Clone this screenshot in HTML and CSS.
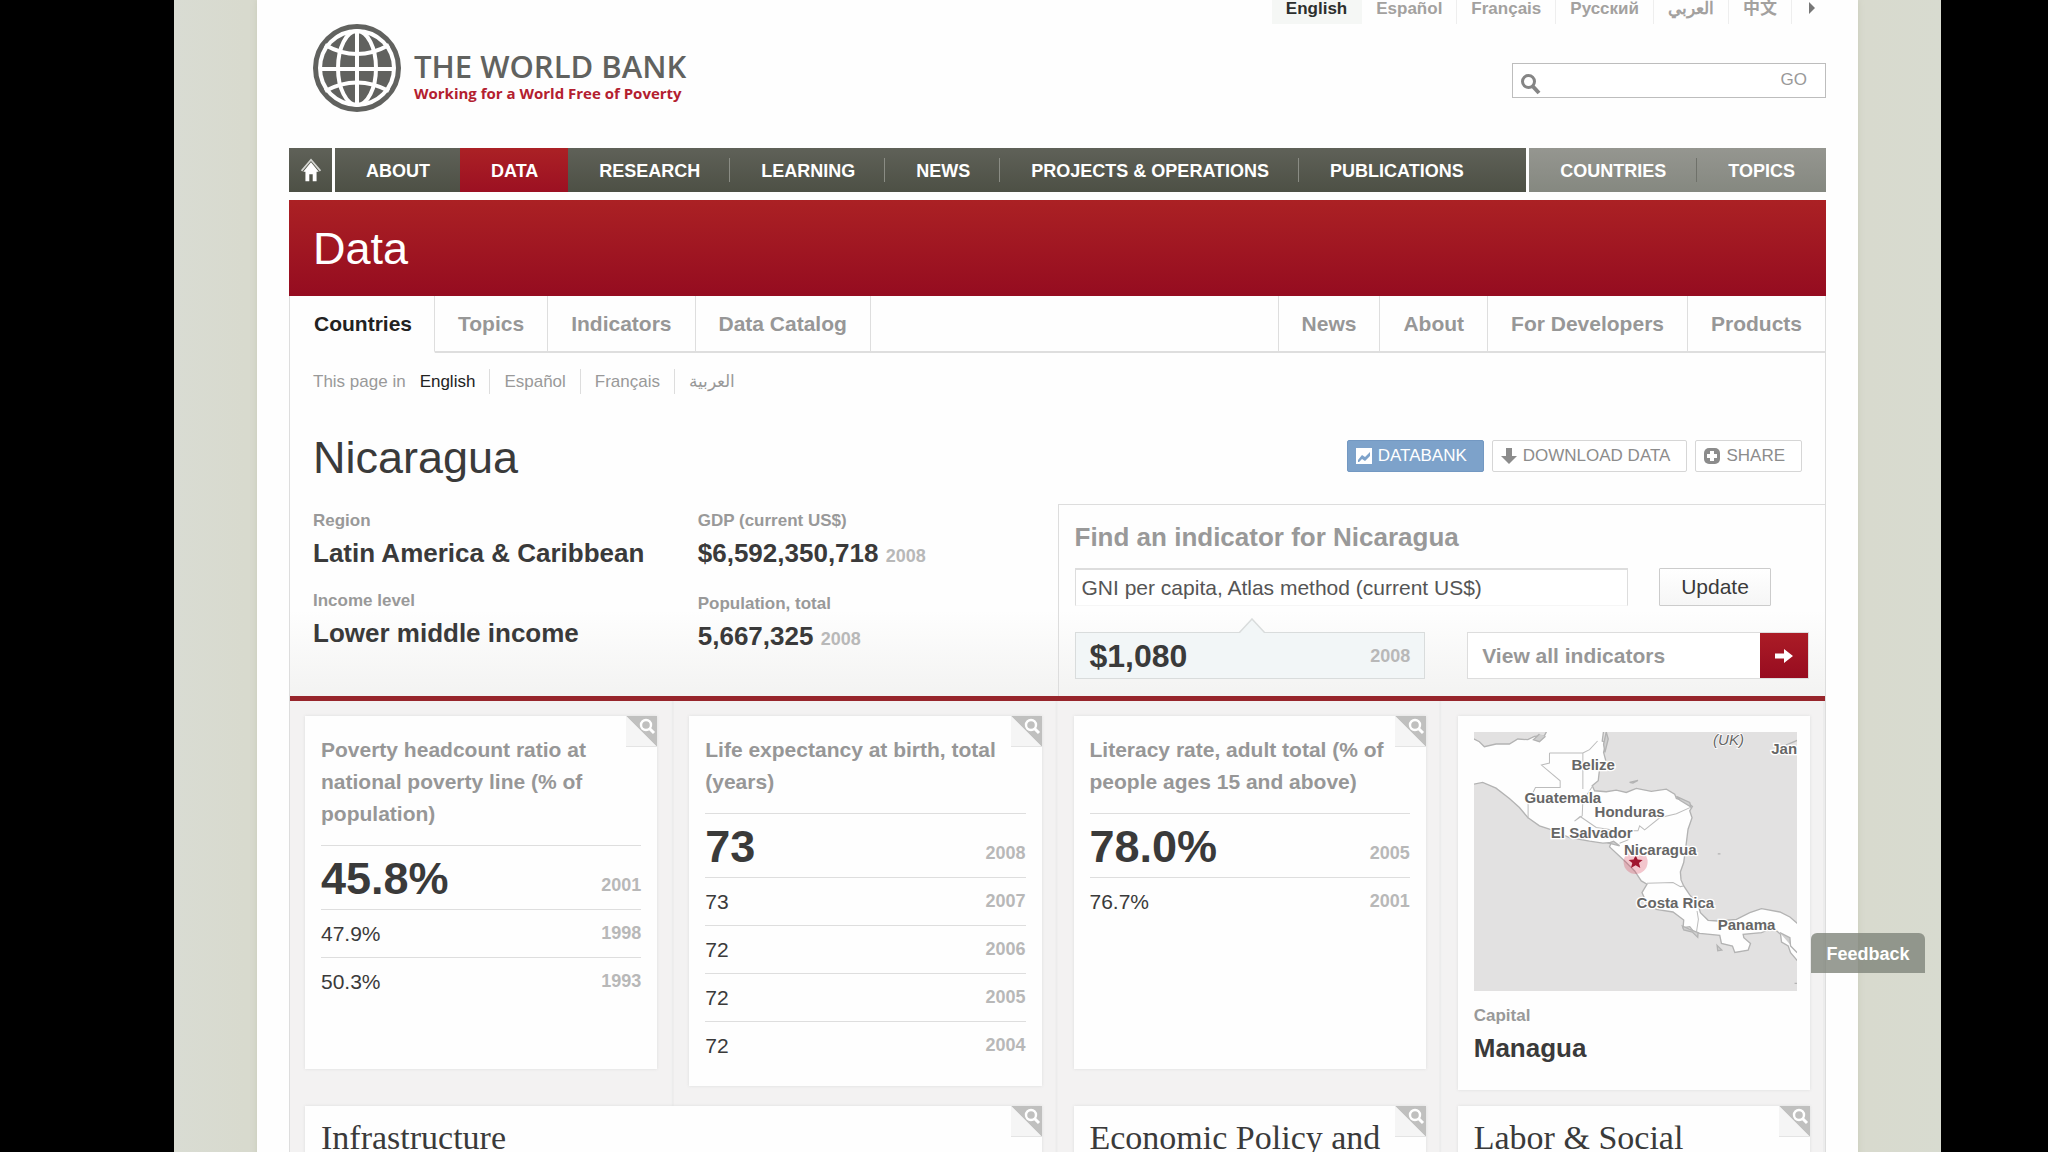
FILE: index.html
```html
<!DOCTYPE html>
<html lang="en">
<head>
<meta charset="utf-8">
<title>Nicaragua | Data | The World Bank</title>
<link rel="stylesheet" href="styles.css">
</head>
<body>
<svg class="defs" aria-hidden="true">
  <symbol id="zoom-corner" viewBox="0 0 31 31">
    <path d="M0 0H31V31Z" fill="#c0c0bf"/>
    <path d="M0 0V31H31Z" fill="#f5f5f5"/>
    <path d="M0 31H31" stroke="#e4e4e4" stroke-width="2"/>
    <circle cx="20" cy="9" r="5" fill="none" stroke="#fff" stroke-width="2.4"/>
    <path d="M23.5 12.5L28 17" stroke="#fff" stroke-width="3"/>
  </symbol>
</svg>
<div class="backdrop">
<div class="page">
  <header class="header">
    <a class="logo" href="#">
      <svg class="globe" viewBox="0 0 88 88" aria-hidden="true">
        <circle cx="44" cy="44" r="41.5" fill="#fff" stroke="#61625f" stroke-width="5"/>
        <circle cx="44" cy="44" r="35" fill="#61625f"/>
        <g fill="none" stroke="#fff" stroke-width="4">
          <path d="M44 8V80M8 45H80"/>
          <ellipse cx="44" cy="44" rx="19" ry="37"/>
          <path d="M12 21Q44 39 76 21M12 67Q44 50 76 67"/>
        </g>
      </svg>
      <span class="logo-text">
        <span class="logo-name">THE WORLD BANK</span>
        <span class="logo-tag">Working for a World Free of Poverty</span>
      </span>
    </a>
    <div class="header-tools">
      <nav class="langs" aria-label="Site language">
        <a class="current" href="#">English</a>
        <a href="#">Español</a>
        <a href="#">Français</a>
        <a href="#">Русский</a>
        <a href="#" lang="ar">العربي</a>
        <a href="#" lang="zh">中文</a>
        <a class="more" href="#" aria-label="More languages"><svg viewBox="0 0 6 12" width="6" height="12"><path d="M0 0L6 6L0 12Z" fill="#777"/></svg></a>
      </nav>
      <form class="search">
        <svg viewBox="0 0 22 22" width="22" height="22" aria-hidden="true"><circle cx="8.500" cy="8.500" r="6" fill="none" stroke="#858585" stroke-width="3"/><path d="M12.500 13L19 20" stroke="#858585" stroke-width="4"/></svg>
        <input type="text" aria-label="Search">
        <button type="submit">GO</button>
      </form>
    </div>
  </header>

  <nav class="mainnav" aria-label="Main">
    <a class="home" href="#" aria-label="Home"><svg viewBox="0 0 24 28" width="24" height="24"><path d="M1 15L12 2L23 15" fill="none" stroke="#d5d6d2" stroke-width="2"/><path d="M12 5L21 16H18.500V27H14V19H10V27H5.500V16H3Z" fill="#fff"/></svg></a>
    <div class="nav-primary">
      <a href="#">ABOUT</a>
      <a class="active" href="#">DATA</a>
      <a href="#">RESEARCH</a>
      <a href="#">LEARNING</a>
      <a href="#">NEWS</a>
      <a href="#">PROJECTS &amp; OPERATIONS</a>
      <a href="#">PUBLICATIONS</a>
    </div>
    <div class="nav-secondary">
      <a href="#">COUNTRIES</a>
      <a href="#">TOPICS</a>
    </div>
  </nav>

  <div class="banner">Data</div>

  <main class="content">
    <nav class="tabs" aria-label="Data">
      <a class="current" href="#">Countries</a>
      <a href="#">Topics</a>
      <a href="#">Indicators</a>
      <a href="#">Data Catalog</a>
      <span class="tabs-fill"></span>
      <a href="#">News</a>
      <a href="#">About</a>
      <a href="#">For Developers</a>
      <a href="#">Products</a>
    </nav>

    <section class="overview">
      <nav class="page-langs" aria-label="Page language">
        <span>This page in</span>
        <a class="current" href="#">English</a>
        <a href="#">Español</a>
        <a href="#">Français</a>
        <a href="#" lang="ar">العربية</a>
      </nav>
      <div class="title-row">
        <h1>Nicaragua</h1>
        <div class="actions">
          <button class="action databank" type="button"><svg viewBox="0 0 16 16" width="16" height="16"><path d="M0 0H16V16H0Z" fill="#fff"/><path d="M2 12L6 7L9 9L14 4V8L9 13L6 11L3 14H2Z" fill="#7da2ca"/></svg>DATABANK</button>
          <button class="action" type="button"><svg viewBox="0 0 16 16" width="16" height="16"><path d="M5 0H11V8H16L8 16L0 8H5Z" fill="#8c8c8c"/></svg>DOWNLOAD DATA</button>
          <button class="action" type="button"><svg viewBox="0 0 16 16" width="16" height="16"><rect width="16" height="16" rx="5" fill="#8c8c8c"/><path d="M8 3V13M3 8H13" stroke="#fff" stroke-width="4"/></svg>SHARE</button>
        </div>
      </div>
      <div class="facts-row">
        <dl class="facts">
          <div><dt>Region</dt><dd>Latin America &amp; Caribbean</dd></div>
          <div><dt>Income level</dt><dd>Lower middle income</dd></div>
        </dl>
        <dl class="facts">
          <div><dt>GDP (current US$)</dt><dd>$6,592,350,718 <small>2008</small></dd></div>
          <div><dt>Population, total</dt><dd>5,667,325 <small>2008</small></dd></div>
        </dl>
        <form class="finder">
          <label for="indicator">Find an indicator for Nicaragua</label>
          <div class="finder-line">
            <select id="indicator"><option>GNI per capita, Atlas method (current US$)</option></select>
            <button class="update" type="button">Update</button>
          </div>
          <div class="results">
            <div class="result">
              <svg class="pointer" viewBox="0 0 28 15" aria-hidden="true"><path d="M1 15L14 1L27 15" fill="#f2f6f7" stroke="#d9dcdc" stroke-width="1.500"/></svg>
              <strong>$1,080</strong><small>2008</small>
            </div>
            <a class="view-all" href="#"><span>View all indicators</span><i><svg viewBox="0 0 18 14" width="18" height="14"><path d="M0 4.500H9V0L18 7L9 14V9.500H0Z" fill="#fff"/></svg></i></a>
          </div>
        </form>
      </div>
    </section>

    <section class="cards">
      <article class="card">
        <svg class="corner"><use href="#zoom-corner"/></svg>
        <h3>Poverty headcount ratio at national poverty line (% of population)</h3>
        <table>
          <tr class="latest"><td>45.8%</td><td>2001</td></tr>
          <tr><td>47.9%</td><td>1998</td></tr>
          <tr><td>50.3%</td><td>1993</td></tr>
        </table>
      </article>
      <article class="card">
        <svg class="corner"><use href="#zoom-corner"/></svg>
        <h3>Life expectancy at birth, total (years)</h3>
        <table>
          <tr class="latest"><td>73</td><td>2008</td></tr>
          <tr><td>73</td><td>2007</td></tr>
          <tr><td>72</td><td>2006</td></tr>
          <tr><td>72</td><td>2005</td></tr>
          <tr><td>72</td><td>2004</td></tr>
        </table>
      </article>
      <article class="card">
        <svg class="corner"><use href="#zoom-corner"/></svg>
        <h3>Literacy rate, adult total (% of people ages 15 and above)</h3>
        <table>
          <tr class="latest"><td>78.0%</td><td>2005</td></tr>
          <tr><td>76.7%</td><td>2001</td></tr>
        </table>
      </article>
      <article class="card map-card">
        <svg class="map" viewBox="44 39 968 777" role="img" aria-label="Map of Central America">
          <rect x="44" y="39" width="968" height="777" fill="#e2e1e1"/>
          <path class="land" d="M40 58L60 68L75 83L110 75L150 75L175 60L205 62L225 52L255 50L262 36H432L428 66L440 72L432 100L440 130L420 150L416 185L398 200L405 215L440 218L470 213L500 220L530 208L575 217L620 210L645 225L650 238L680 248L698 262L690 275L697 296L685 330L680 370L672 430L662 458L664 482L672 500L690 527L715 555L722 580L745 603L775 605L830 600L870 580L905 568L960 578L990 593L1016 615V728L992 700L985 680L965 668L962 645L940 625L905 640L850 645L852 655L872 672L865 692L825 699L818 680L785 672L780 648L720 642L700 635L690 622L670 625L672 602L640 578L590 570L556 540L547 520L562 495L545 485L525 455L500 430L450 383L455 370L430 372L390 366L330 355L270 330L240 320L205 295L180 265L150 238L110 207L70 190L40 196Z"/>
          <path class="shore" d="M240 45L222 62L240 68L258 52M650 232L690 250L694 264L662 244ZM440 39L446 60L436 100L432 76ZM510 190L535 184L520 192ZM668 620L690 630L715 640L714 654L698 638L672 632ZM772 678L786 692L774 694ZM448 372L480 380L462 366ZM774 404H782M978 78L1012 64M1004 792H1012M960 640L990 655L992 680L1012 700"/>
          <path class="border" d="M270 102H370V210M270 102V132L246 138L302 185V205H228L206 250V298M370 102L390 92L414 66M400 200L370 245L368 290L345 306L362 292L410 325L475 335H535L540 320L555 332L600 296L650 284L694 264M475 335L508 340L505 362L480 372M562 492L640 490L662 502L672 500M712 575L716 600L710 640"/>
          <circle cx="528" cy="428" r="36" fill="#d6354f" opacity=".28"/>
          <path d="M528 408L534 421L549 422L538 431L542 446L528 438L514 446L518 431L507 422L522 421Z" fill="#a0152e"/>
          <g class="places">
            <text x="336" y="154">Belize</text>
            <text x="195" y="251">Guatemala</text>
            <text x="405" y="295">Honduras</text>
            <text x="274" y="357">El Salvador</text>
            <text x="493" y="407">Nicaragua</text>
            <text x="531" y="567">Costa Rica</text>
            <text x="774" y="632">Panama</text>
            <text x="934" y="106">Jan</text>
            <text class="sea" x="760" y="78">(UK)</text>
          </g>
        </svg>
        <dl class="capital"><dt>Capital</dt><dd>Managua</dd></dl>
      </article>
      <article class="card wide">
        <svg class="corner"><use href="#zoom-corner"/></svg>
        <h2>Infrastructure</h2>
      </article>
      <article class="card">
        <svg class="corner"><use href="#zoom-corner"/></svg>
        <h2>Economic Policy and</h2>
      </article>
      <article class="card">
        <svg class="corner"><use href="#zoom-corner"/></svg>
        <h2>Labor &amp; Social</h2>
      </article>
    </section>
  </main>
</div>
<button class="feedback" type="button">Feedback</button>
</div>
</body>
</html>
```

FILE: styles.css
```css
* { box-sizing: border-box; }

body {
  margin: 0;
  padding: 0 107px 0 174px;
  background: #000;
  color: #3a3a3a;
  font-family: "Liberation Sans", "Noto Sans CJK SC", sans-serif;
  font-size: 17px;
}

a { color: inherit; text-decoration: none; }
button, input, select { font: inherit; color: inherit; margin: 0; }
h1, h2, h3, dl, dd { margin: 0; }
.defs { display: none; }

.backdrop {
  position: relative;
  height: 100vh;
  overflow: hidden;
  padding: 0 83px;
  background: linear-gradient(90deg, #d9dcd3, #d8dace 4%, #d8dace 96%, #d8dbd0);
}

.page {
  min-height: 100%;
  padding: 0 32px;
  background: #fefefe;
  box-shadow: 0 0 6px #c8cab8;
}

/* Header */
.header {
  display: flex;
  justify-content: space-between;
  height: 148px;
}
.logo {
  display: flex;
  align-items: flex-start;
  gap: 13px;
  padding: 24px 0 0 24px;
}
.globe { width: 88px; height: 88px; }
.logo-text {
  display: flex;
  flex-direction: column;
  padding-top: 26px;
  font-family: "Open Sans", sans-serif;
  white-space: nowrap;
}
.logo-name { font-size: 31px; line-height: 33px; font-weight: 600; color: #61625f; }
.logo-tag { font-size: 15px; line-height: 20px; font-weight: 700; color: #b3202f; }

.header-tools {
  display: flex;
  flex-direction: column;
  align-items: flex-end;
  gap: 39px;
}
.langs {
  display: flex;
  height: 24px;
  font-size: 17px;
  font-weight: 700;
  line-height: 18px;
  color: #a3a19f;
}
.langs a { padding: 0 14px; border-right: 1px solid #eee; }
.langs .current { color: #2c2f2d; background: #f5f7f5; border-color: #f5f7f5; }
.langs .more { padding: 0 11px 0 17px; border: 0; }

.search {
  display: flex;
  align-items: center;
  width: 314px;
  height: 35px;
  padding: 0 8px 0 7px;
  border: 1px solid #bdbdbd;
  background: #fff;
}
.search svg { margin-top: 6px; flex: none; }
.search input { flex: 1; min-width: 0; border: 0; outline: 0; background: none; }
.search button { border: 0; padding: 0 10px 2px; background: none; color: #999; }

/* Main navigation */
.mainnav {
  display: flex;
  gap: 3px;
  height: 44px;
  margin-bottom: 8px;
  color: #fff;
  font-size: 18px;
  font-weight: 700;
  line-height: 46px;
}
.home, .nav-primary { background: linear-gradient(#5f6158, #4d5045); }
.home { display: flex; align-items: center; justify-content: center; width: 43px; }
.nav-primary { display: flex; flex: 1; }
.nav-secondary { display: flex; background: linear-gradient(#959690, #858880); }
.mainnav div a {
  padding: 0 30px 0 31px;
  background: linear-gradient(#8a8c84, #8a8c84) right center / 1px 24px no-repeat;
}
.nav-primary a:first-child, .mainnav div a:last-child { background: none; }
.nav-primary .active { background: linear-gradient(#ab2125, #9c1022); }
.mainnav .nav-secondary a { padding: 0 31px; }
.nav-secondary a:first-child { background-image: linear-gradient(#6f716a, #6f716a); }

.banner {
  height: 96px;
  padding-left: 24px;
  background: linear-gradient(#ab2124, #950c20);
  color: #fff;
  font-size: 45px;
  line-height: 98px;
}

/* Tabs */
.content { border: solid #ddd; border-width: 0 1px; }
.tabs {
  display: flex;
  color: #979797;
  font-size: 21px;
  font-weight: 700;
  line-height: 55px;
}
.tabs > * { border-bottom: 2px solid #dedede; }
.tabs a { padding: 0 23px; border-right: 1px solid #dedede; }
.tabs .current { padding: 0 22px 0 24px; color: #222; border-bottom-color: transparent; }
.tabs-fill { flex: 1; border-right: 1px solid #dedede; }
.tabs a:last-child { border-right: 0; }

/* Country overview */
.overview {
  background: linear-gradient(#fefefe 75%, #f3f3f2);
  border-bottom: 5px solid #97252b;
}
.page-langs {
  display: flex;
  padding: 16px 0 0 23px;
  color: #999;
  line-height: 25px;
}
.page-langs a { padding: 0 14px; border-right: 1px solid #ddd; }
.page-langs .current { color: #222; }
.page-langs a:last-child { border: 0; }

.title-row {
  display: flex;
  justify-content: space-between;
  align-items: center;
  height: 60px;
  margin-top: 32px;
  padding: 0 23px;
}
.title-row h1 { padding-top: 4px; font-size: 45px; font-weight: 400; line-height: 56px; }
.actions { display: flex; gap: 8px; }
.action {
  display: flex;
  align-items: center;
  gap: 6px;
  height: 32px;
  padding: 0 16px 0 8px;
  border: 1px solid #d6d6d6;
  border-radius: 2px;
  background: #fff;
  color: #8c8c8c;
}
.databank { background: #7da2ca; border-color: #7398c2; color: #fff; }

.facts-row { display: grid; grid-template-columns: 1fr 1fr 2fr; margin-top: 18px; }
.facts { padding: 5px 0 0 23px; }
.facts div { height: 80px; white-space: nowrap; }
.facts + .facts { padding-left: 24px; }
.facts + .facts div { height: 83px; }
dt { color: #999; font-weight: 700; line-height: 24px; }
dd { font-size: 26px; font-weight: 700; line-height: 40px; }
small { color: #b8b8b8; font-size: 18px; font-weight: 700; }

.finder {
  height: 192px;
  padding: 16px 16px 0;
  border: solid #ddd;
  border-width: 1px 0 0 1px;
}
.finder label {
  display: block;
  color: #999;
  font-size: 26px;
  font-weight: 700;
  line-height: 32px;
}
.finder-line { display: flex; margin-top: 15px; }
.finder select {
  flex: 1;
  height: 38px;
  margin-right: 31px;
  padding: 0 6px;
  border: 1px solid #ddd;
  border-top-width: 2px;
  border-bottom-color: #f6f6f6;
  border-radius: 0;
  background: #fff;
  color: #555;
  font-size: 21px;
  appearance: none;
}
.update {
  width: 112px;
  margin-right: 38px;
  border: 1px solid #ccc;
  border-radius: 1px;
  background: linear-gradient(#fff, #f6f6f6);
  font-size: 21px;
}
.results {
  display: grid;
  grid-template-columns: 351fr 342fr;
  gap: 42px;
  margin-top: 26px;
}
.result {
  position: relative;
  display: flex;
  align-items: center;
  justify-content: space-between;
  height: 47px;
  padding: 2px 14px 0;
  border: 1px solid #d9dcdc;
  background: #f2f6f7;
}
.result strong { font-size: 32px; }
.pointer { position: absolute; left: 162px; top: -15px; width: 28px; height: 15px; }
.view-all {
  display: flex;
  height: 47px;
  border: 1px solid #ddd;
  background: #fff;
  color: #979797;
  font-size: 21px;
  font-weight: 700;
  line-height: 46px;
}
.view-all span { flex: 1; padding-left: 14px; }
.view-all i {
  display: flex;
  align-items: center;
  justify-content: center;
  width: 48px;
  background: linear-gradient(#ab1c26, #970c20);
}

/* Indicator cards */
.cards {
  display: grid;
  grid-template-columns: repeat(4, 1fr);
  align-items: start;
  gap: 16px 32px;
  padding: 15px 15px 32px;
  background:
    linear-gradient(90deg, transparent calc(100% - 2px), #ececec 0) 0 0 / 25% 100%,
    #f3f2f2;
}
.card {
  position: relative;
  min-height: 353px;
  padding: 18px 16px 16px;
  background: #fefefe;
  box-shadow: 0 0 3px #dcdcdc;
}
.card.wide { grid-column: span 2; }
.corner { position: absolute; top: 0; right: 0; width: 31px; height: 31px; }
.card h3 {
  margin-bottom: 15px;
  color: #979797;
  font-size: 21px;
  line-height: 32px;
}
.card h2 {
  font-family: "Liberation Serif", serif;
  font-size: 34px;
  font-weight: 400;
  line-height: 28px;
  white-space: nowrap;
}
.card table { width: 100%; border-collapse: collapse; font-size: 21px; }
.card td { height: 48px; padding: 0; border-top: 1px solid #dedede; }
.card td + td { color: #b8b8b8; font-size: 18px; font-weight: 700; text-align: right; }
.latest td { height: 64px; }
.latest td:first-child { padding-top: 2px; font-size: 45px; font-weight: 700; line-height: 60px; }
.latest td + td { padding-top: 16px; }

.map-card { padding: 16px 13px 22px 16px; }
.map { display: block; width: 100%; }
.land { fill: #fefefe; stroke: #b3b3b3; stroke-width: 4; }
.shore { fill: #cfcfcf; stroke: #b3b3b3; stroke-width: 4; }
.border { fill: none; stroke: #bcbcbc; stroke-width: 3; }
.places {
  fill: #666;
  stroke: #fff;
  stroke-width: 8;
  paint-order: stroke;
  font-size: 45px;
  font-weight: 700;
}
.places .sea { font-weight: 400; font-style: italic; stroke-width: 4; }
.capital { margin-top: 13px; }

.feedback {
  position: absolute;
  right: 16px;
  top: 933px;
  width: 114px;
  height: 40px;
  padding: 2px 0 0;
  border: 0;
  border-radius: 6px 6px 0 0;
  background: rgba(128, 132, 122, .8);
  color: #fff;
  font-size: 18px;
  font-weight: 700;
}
```
